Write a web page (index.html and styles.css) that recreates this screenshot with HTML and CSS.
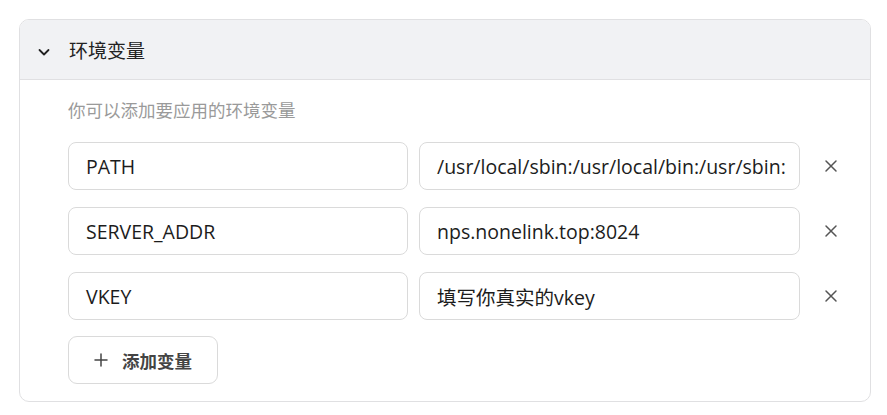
FILE: index.html
```html
<!DOCTYPE html>
<html lang="zh">
<head>
<meta charset="utf-8">
<link rel="stylesheet" href="styles.css">
</head>
<body>
<div class="card">
  <div class="card-header">
    <svg class="chevron" width="14" height="14" viewBox="0 0 14 14"><path d="M2.5 5 L7 9.5 L11.5 5" fill="none" stroke="#222" stroke-width="1.8" stroke-linecap="round" stroke-linejoin="round"/></svg>
    <span class="title">环境变量</span>
  </div>
  <div class="card-body">
    <div class="desc">你可以添加要应用的环境变量</div>
    <div class="rows">
      <div class="row">
        <div class="input key">PATH</div>
        <div class="input val">/usr/local/sbin:/usr/local/bin:/usr/sbin:</div>
        <div class="remove"><svg width="14" height="14" viewBox="0 0 14 14"><path d="M2 2 L12 12 M12 2 L2 12" stroke="#555" stroke-width="1.5" stroke-linecap="round"/></svg></div>
      </div>
      <div class="row">
        <div class="input key">SERVER_ADDR</div>
        <div class="input val">nps.nonelink.top:8024</div>
        <div class="remove"><svg width="14" height="14" viewBox="0 0 14 14"><path d="M2 2 L12 12 M12 2 L2 12" stroke="#555" stroke-width="1.5" stroke-linecap="round"/></svg></div>
      </div>
      <div class="row">
        <div class="input key">VKEY</div>
        <div class="input val">填写你真实的vkey</div>
        <div class="remove"><svg width="14" height="14" viewBox="0 0 14 14"><path d="M2 2 L12 12 M12 2 L2 12" stroke="#555" stroke-width="1.5" stroke-linecap="round"/></svg></div>
      </div>
    </div>
    <div class="add-btn">
      <svg width="14" height="14" viewBox="0 0 14 14"><path d="M7 1 V13 M1 7 H13" stroke="#444" stroke-width="1.5" stroke-linecap="round"/></svg>
      <span>添加变量</span>
    </div>
  </div>
</div>
</body>
</html>
```
FILE: styles.css
```css
html, body {
  margin: 0;
  padding: 0;
  background: #fff;
}
body {
  font-family: "Open Sans", "Noto Sans CJK SC", sans-serif;
  color: #1f1f1f;
  padding: 19px 14px 0 19px;
}
.card {
  width: 852px;
  box-sizing: border-box;
  border: 1px solid #e0e0e2;
  border-radius: 10px;
  overflow: hidden;
}
.card-header {
  height: 60px;
  background: #f1f2f4;
  border-bottom: 1px solid #e0e0e2;
  display: flex;
  align-items: center;
  padding-left: 17px;
  box-sizing: border-box;
}
.chevron {
  margin-top: 4px;
  margin-right: 18px;
}
.title {
  font-size: 19px;
  color: #222;
  font-family: "Noto Sans CJK SC", sans-serif;
}
.card-body {
  padding: 18px 8px 17px 48px;
}
.desc {
  font-size: 17.5px;
  line-height: 24px;
  color: #9a9a9a;
  font-family: "Noto Sans CJK SC", sans-serif;
  margin-bottom: 20px;
}
.rows {
  display: flex;
  flex-direction: column;
  gap: 17px;
}
.row {
  display: flex;
  align-items: center;
  gap: 11px;
}
.input {
  height: 48px;
  box-sizing: border-box;
  border: 1px solid #dadada;
  border-radius: 8px;
  padding: 0 17px;
  display: flex;
  align-items: center;
  font-size: 19.5px;
  color: #1c1c1c;
  white-space: nowrap;
  overflow: hidden;
}
.key { width: 340px; }
.val { width: 381px; }
.remove {
  width: 40px;
  display: flex;
  justify-content: center;
  align-items: center;
}
.add-btn {
  margin-top: 16px;
  width: 150px;
  height: 48px;
  box-sizing: border-box;
  border: 1px solid #dadada;
  border-radius: 9px;
  display: flex;
  align-items: center;
  padding-left: 25px;
  gap: 14px;
  font-size: 17.5px;
  font-weight: bold;
  color: #444;
  font-family: "Noto Sans CJK SC", sans-serif;
}
```
